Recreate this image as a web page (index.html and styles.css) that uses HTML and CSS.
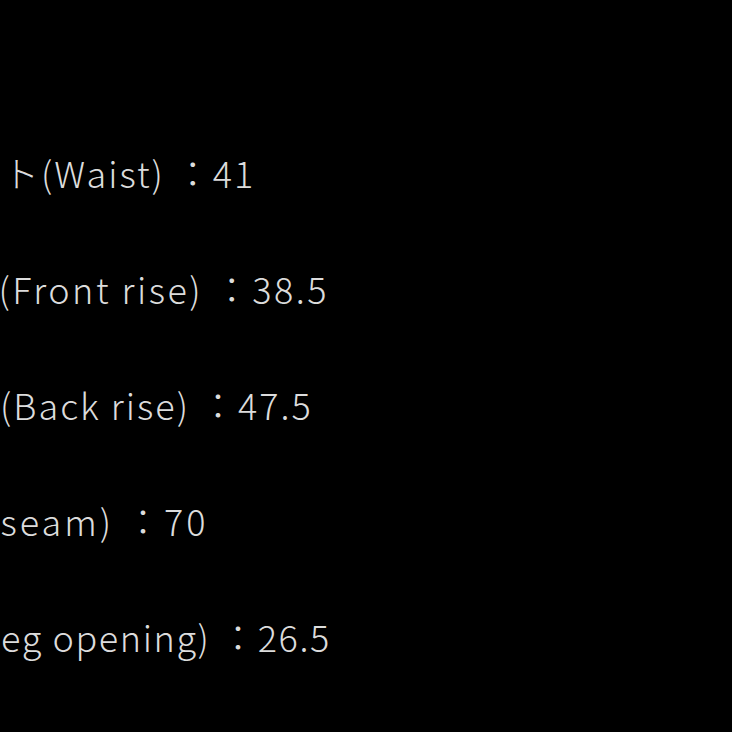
FILE: index.html
```html
<!DOCTYPE html>
<html lang="ja">
<head>
<meta charset="utf-8">
<link rel="stylesheet" href="styles.css">
</head>
<body>
<div class="sizes">
  <p class="line l1">ウエスト(Waist) ：41</p>
  <p class="line l2">股上前(Front rise) ：38.5</p>
  <p class="line l3">股上後(Back rise) ：47.5</p>
  <p class="line l4">股下(Inseam) ：70</p>
  <p class="line l5">裾幅(Leg opening) ：26.5</p>
</div>
</body>
</html>
```
FILE: styles.css
```css
html, body {
  margin: 0;
  padding: 0;
  background: #000;
  width: 732px;
  height: 732px;
  overflow: hidden;
}
.sizes {
  display: flex;
  flex-direction: column;
  padding-top: 126px;
}
.line {
  margin: 0;
  height: 116px;
  line-height: 92px;
  white-space: nowrap;
  font-family: "Noto Sans CJK JP", "Noto Sans", sans-serif;
  font-size: 36px;
  font-weight: 300;
  letter-spacing: 1.5px;
  color: #dcdcdc;
}
.l1 { margin-left: -111px; letter-spacing: 2px; }
.l2 { margin-left: -117px; letter-spacing: 2.5px; }
.l3 { margin-left: -114px; letter-spacing: 2px; }
.l4 { margin-left: -129px; letter-spacing: 3px; }
.l5 { margin-left: -107px; letter-spacing: 1.6px; }
```
